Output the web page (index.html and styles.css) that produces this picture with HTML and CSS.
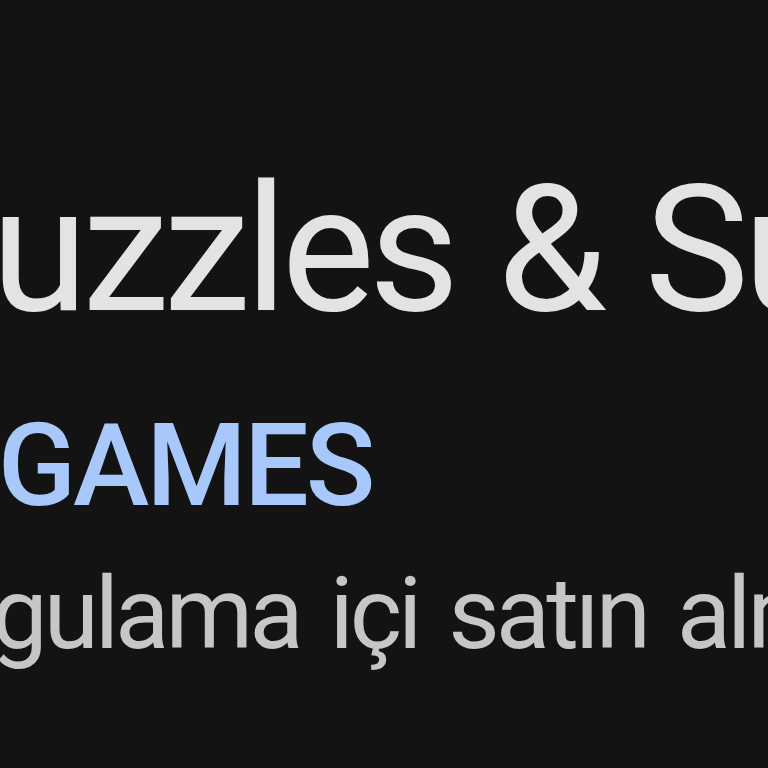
FILE: index.html
```html
<!DOCTYPE html>
<html lang="tr">
<head>
<meta charset="utf-8">
<link rel="stylesheet" href="styles.css">
</head>
<body>
<main class="header">
  <h1 class="title">Puzzles &amp; Survival</h1>
  <div class="dev">37GAMES</div>
  <div class="meta">Uygulama içi satın alma işlemleri</div>
</main>
</body>
</html>
```
FILE: styles.css
```css
html, body {
  margin: 0;
  padding: 0;
  background: #131313;
  width: 768px;
  height: 768px;
  overflow: hidden;
}
.header {
  display: flex;
  flex-direction: column;
  padding-top: 162px;
  font-family: Roboto, "Noto Sans", sans-serif;
  white-space: nowrap;
}
.title {
  margin: 0 0 0 -114px;
  font-size: 176px;
  line-height: 176px;
  font-weight: 400;
  letter-spacing: -6px;
  word-spacing: 6px;
  color: #e3e3e3;
}
.dev {
  margin: 70px 0 0 -127px;
  font-size: 115px;
  line-height: 115px;
  font-weight: 500;
  letter-spacing: -3px;
  color: #a8c7fa;
}
.meta {
  margin: 41px 0 0 -112px;
  font-size: 100px;
  line-height: 100px;
  letter-spacing: -4px;
  word-spacing: 9px;
  color: #c4c7c5;
}
```
